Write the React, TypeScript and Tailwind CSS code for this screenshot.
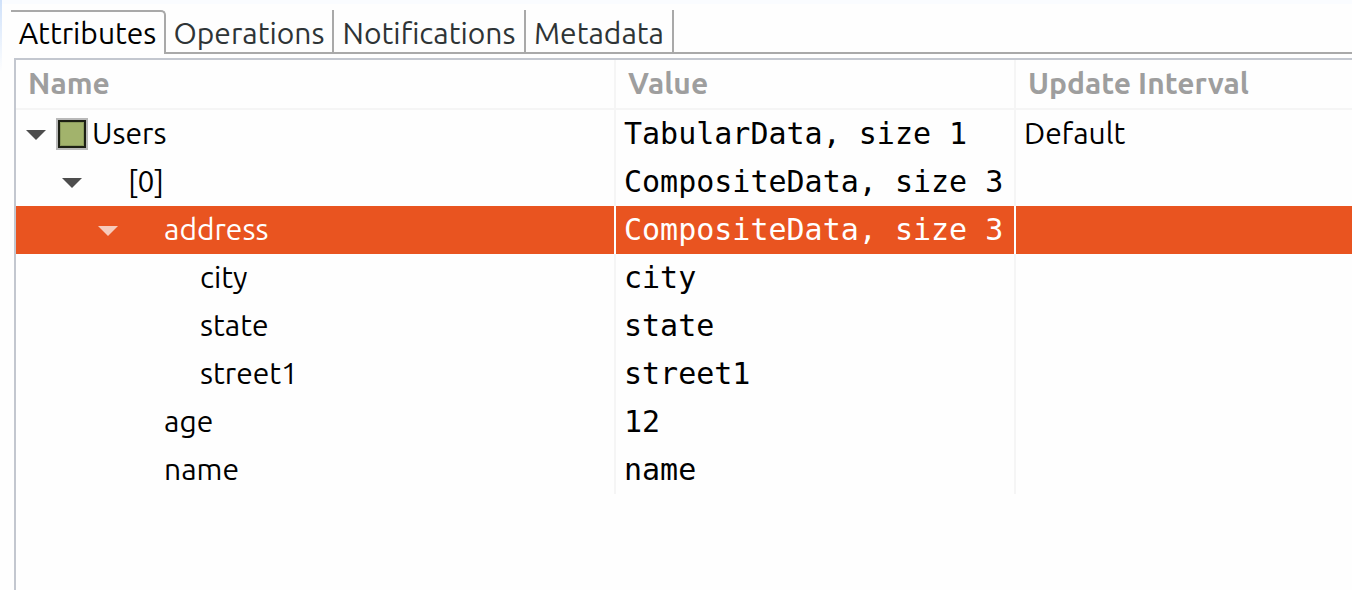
import { useState } from "react";
import clsx from "clsx";

type Row = {
  id: string;
  parent: string | null;
  depth: number;
  name: string;
  value: string;
  interval?: string;
  branch?: boolean;
};

const tabs = [
  { label: "Attributes", width: "w-[155px]" },
  { label: "Operations", width: "w-[168px]" },
  { label: "Notifications", width: "w-[192px]" },
  { label: "Metadata", width: "w-[148px]" },
];

const rows: Row[] = [
  { id: "users", parent: null, depth: 0, name: "Users", value: "TabularData, size 1", interval: "Default", branch: true },
  { id: "item0", parent: "users", depth: 1, name: "[0]", value: "CompositeData, size 3", branch: true },
  { id: "address", parent: "item0", depth: 2, name: "address", value: "CompositeData, size 3", branch: true },
  { id: "city", parent: "address", depth: 3, name: "city", value: "city" },
  { id: "state", parent: "address", depth: 3, name: "state", value: "state" },
  { id: "street1", parent: "address", depth: 3, name: "street1", value: "street1" },
  { id: "age", parent: "item0", depth: 2, name: "age", value: "12" },
  { id: "name", parent: "item0", depth: 2, name: "name", value: "name" },
];

const indents = ["pl-[10px]", "pl-[46px]", "pl-[82px]", "pl-[118px]"];

function TabBar({ active, onSelect }: { active: string; onSelect: (label: string) => void }) {
  return (
    <div role="tablist" className="flex h-11 pl-[11px] text-[30px] leading-none">
      {tabs.map(({ label, width }) => {
        const selected = label === active;
        return (
          <button
            key={label}
            type="button"
            role="tab"
            aria-selected={selected}
            onClick={() => onSelect(label)}
            className={clsx(
              "flex shrink-0 items-center justify-center border-r-2 border-[#a9a9a9]",
              width,
              selected ? "rounded-tr-[5px] border-t-2 pb-px text-black" : "border-b-2 pt-[3px] text-[#2e3436]",
            )}
          >
            {label}
          </button>
        );
      })}
      <div className="flex-1 border-b-2 border-[#a9a9a9]" />
    </div>
  );
}

export default function App() {
  const [active, setActive] = useState("Attributes");
  const [selected, setSelected] = useState("address");
  const [closed, setClosed] = useState<string[]>([]);

  const visible = (row: Row): boolean => {
    if (row.parent === null) return true;
    if (closed.includes(row.parent)) return false;
    const parent = rows.find((r) => r.id === row.parent);
    return parent ? visible(parent) : true;
  };

  const toggle = (id: string) =>
    setClosed((ids) => (ids.includes(id) ? ids.filter((x) => x !== id) : [...ids, id]));

  return (
    <div className="flex min-h-screen bg-[#fefefe] font-['Ubuntu','Noto_Sans',sans-serif] text-black">
      <div className="w-[2px] shrink-0 bg-linear-to-b from-[#cfe1fa] to-[#fefefe] to-[72px]" />
      <div className="-ml-[2px] flex min-w-0 flex-1 flex-col">
        <div className="mb-[6px] ml-[2px] h-1 bg-[#fafcff]" />
        <TabBar active={active} onSelect={setActive} />
        <div className="mt-1 ml-[14px] flex-1 border-t-2 border-l-2 border-[#c3c7cf]">
          <table className="w-full table-fixed border-separate border-spacing-0 text-[30px] leading-none">
            <colgroup>
              <col className="w-[600px]" />
              <col className="w-[400px]" />
              <col />
            </colgroup>
            <thead>
              <tr className="h-[50px] text-left text-[#9e9e9e]">
                <th className="border-r-2 border-b-2 border-[#f5f5f5] pt-0 pr-0 pb-0.5 pl-3 font-bold">Name</th>
                <th className="border-r-2 border-b-2 border-[#f5f5f5] pt-0 pr-0 pb-0.5 pl-3 font-bold">Value</th>
                <th className="border-b-2 border-[#f5f5f5] pt-0 pr-0 pb-0.5 pl-3 font-bold">Update Interval</th>
              </tr>
            </thead>
            <tbody>
              {rows.filter(visible).map((row) => {
                const on = row.id === selected;
                const fill = on ? "bg-[#e95420] bg-clip-padding text-white" : "";
                const edge = on ? "border-[#fefefe]" : "border-[#f5f5f5]";
                return (
                  <tr key={row.id} aria-selected={on} onClick={() => setSelected(row.id)} className="h-12">
                    <td className={clsx("border-r-2 py-0 pr-0", edge, fill, indents[row.depth])}>
                      <div className="flex h-8 items-center">
                        {row.branch ? (
                          <button
                            type="button"
                            aria-label={`Toggle ${row.name}`}
                            aria-expanded={!closed.includes(row.id)}
                            onClick={() => toggle(row.id)}
                            className={clsx(
                              "mr-[10px] flex w-5 shrink-0",
                              on ? "text-[#f7cbbb]" : "text-[#4d4d4d]",
                              closed.includes(row.id) && "-rotate-90",
                            )}
                          >
                            <svg viewBox="0 0 20 12" className="h-3 w-5 fill-current" aria-hidden="true">
                              <path d="M0 2H20L10 12Z" />
                            </svg>
                          </button>
                        ) : (
                          <span className="w-[30px] shrink-0" />
                        )}
                        {row.depth === 0 ? (
                          <svg viewBox="0 0 32 32" className="mr-1 size-8 shrink-0" aria-hidden="true">
                            <rect width="32" height="32" fill="#b9b9b9" />
                            <rect x="2" y="2" width="28" height="28" fill="#1c1f14" />
                            <rect x="4" y="4" width="24" height="24" fill="#8b9b5c" />
                            <rect x="5" y="5" width="22" height="22" fill="#a2b36c" />
                          </svg>
                        ) : (
                          <span className="w-9 shrink-0" />
                        )}
                        <span className="pb-0.5">{row.name}</span>
                      </div>
                    </td>
                    <td
                      className={clsx(
                        "border-r-2 py-0 pr-0 pl-2 font-['DejaVu_Sans_Mono',monospace] whitespace-nowrap",
                        edge,
                        fill,
                      )}
                    >
                      {row.value}
                    </td>
                    <td className={clsx("pt-0 pr-0 pb-0.5 pl-2", fill)}>{row.interval}</td>
                  </tr>
                );
              })}
            </tbody>
          </table>
        </div>
      </div>
    </div>
  );
}
